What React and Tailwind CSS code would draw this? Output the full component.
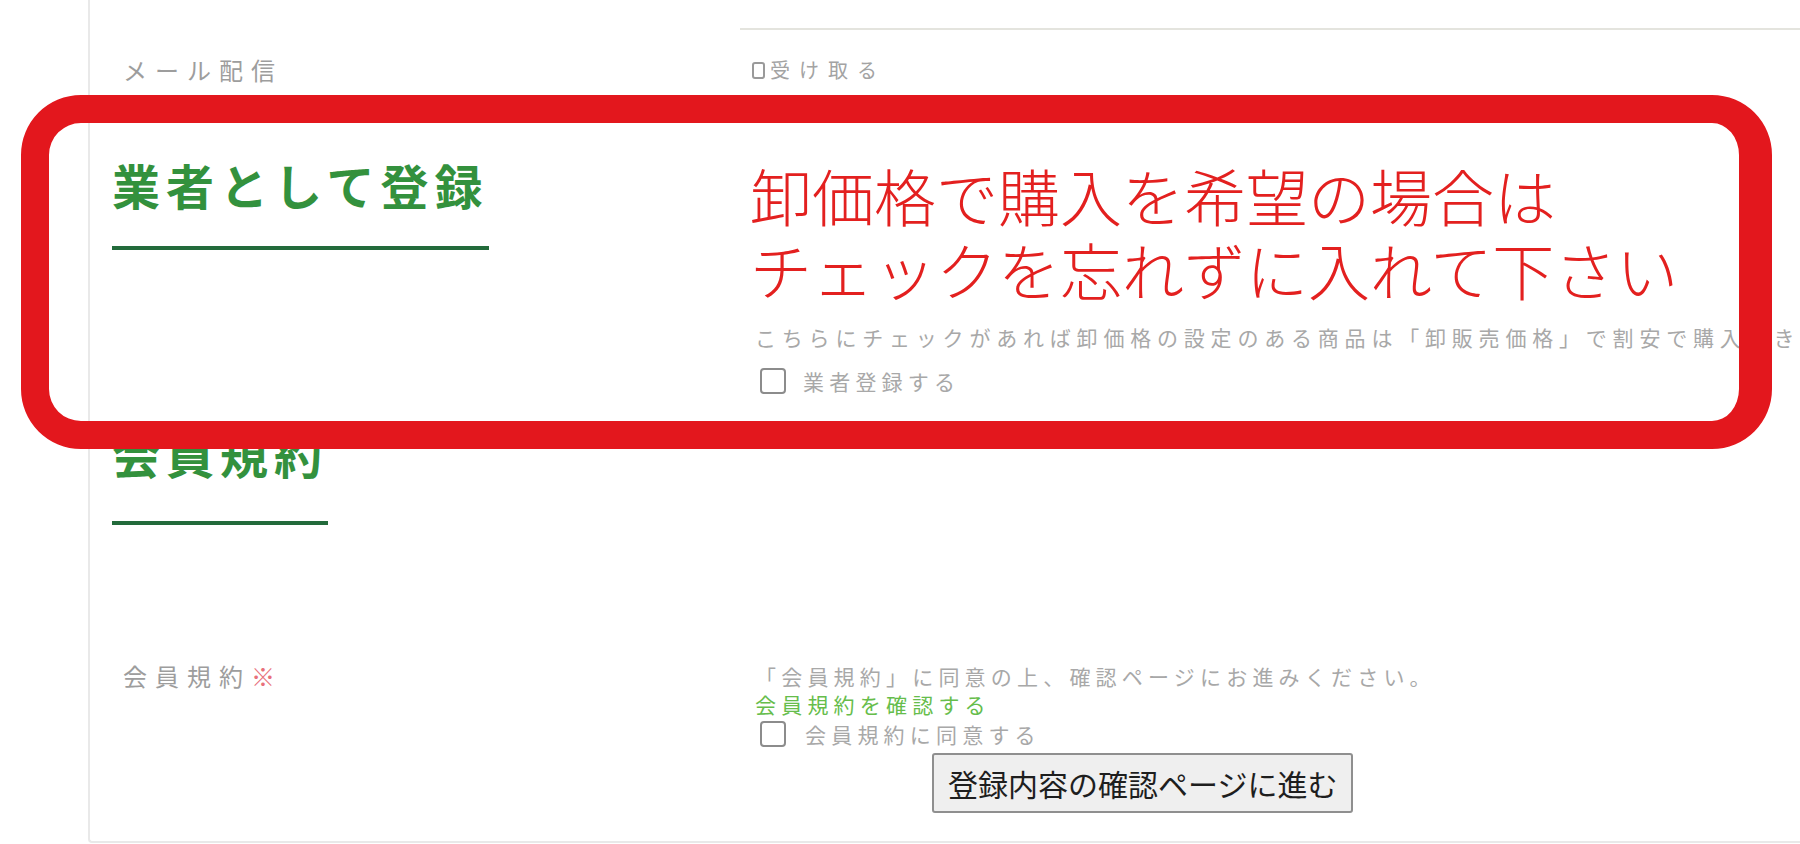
const small = "text-[21px] leading-[28px] tracking-[5.2px] text-[#a8a8a8] whitespace-nowrap";
const label = "text-[24px] tracking-[8px] text-[#9d9d9d]";

function Checkbox() {
  return (
    <span className="inline-block h-[26px] w-[26px] shrink-0 rounded-[4px] border-2 border-[#8c8c8c] bg-white" />
  );
}

function SectionTitle({ children, className = "" }) {
  return (
    <h2
      className={`inline-block border-b-4 border-[#236b3b] text-[48px] font-bold leading-[58px] tracking-[6px] text-[#33913d] ${className}`}
    >
      {children}
    </h2>
  );
}

export default function App() {
  return (
    <div className="relative h-[844px] w-full overflow-hidden bg-white font-['Noto_Sans_CJK_JP',sans-serif]">
      <div className="ml-[88px] h-[843px] w-[1760px] rounded-bl-[4px] border-b-2 border-l-2 border-[#e9e9e9]">
        {/* end of previous row + mail row */}
        <div className="grid grid-cols-[650px_1fr]">
          <div />
          <div className="h-[30px] border-b-2 border-[#e4e4de]" />
          <div className={`pl-[33px] pt-[25px] leading-[30px] ${label}`}>メール配信</div>
          <div className="flex items-center gap-[5px] pl-[12px] pt-[25px] text-[20px] leading-[30px] tracking-[9px] text-[#a3a3a3]">
            <span className="inline-block h-[17px] w-[13px] rounded-[3px] border-2 border-[#9a9a9a]" />
            <span>受け取る</span>
          </div>
        </div>

        {/* business registration */}
        <div className="mt-[67px] grid grid-cols-[650px_1fr]">
          <div className="pl-[22px] pt-[3px]">
            <SectionTitle className="pb-[33px]">業者として登録</SectionTitle>
          </div>
          <div className="pl-[10px] pt-[6px]">
            <p className="text-[62px] font-light leading-[74px] text-[#e3201f]">
              卸価格で購入を希望の場合は
              <br />
              チェックを忘れずに入れて下さい
            </p>
            <p className="mt-[17px] whitespace-nowrap pl-[5px] text-[21px] leading-[28px] tracking-[5.8px] text-[#a8a8a8]">
              こちらにチェックがあれば卸価格の設定のある商品は「卸販売価格」で割安で購入できます。
            </p>
            <label className={`mt-[16px] flex items-center gap-[17px] pl-[10px] ${small}`}>
              <Checkbox />
              <span>業者登録する</span>
            </label>
          </div>
        </div>

        {/* terms */}
        <div className="mt-[29px] pl-[22px]">
          <SectionTitle className="pb-[39px]">会員規約</SectionTitle>
        </div>
        <div className="mt-[137px] grid grid-cols-[650px_1fr]">
          <div className={`pl-[33px] leading-[28px] ${label}`}>
            会員規約<span className="text-[#e8707a]">※</span>
          </div>
          <div className="pl-[15px]">
            <p className={small}>「会員規約」に同意の上、確認ページにお進みください。</p>
            <p className="text-[21px] leading-[28px] tracking-[5.2px] text-[#66bd4b]">会員規約を確認する</p>
            <label className={`flex h-[32px] items-center gap-[19px] pl-[5px] ${small}`}>
              <Checkbox />
              <span>会員規約に同意する</span>
            </label>
            <div className="mt-[3px] pl-[177px]">
              <button className="rounded-[3px] border-2 border-[#8f8f8f] bg-[#efefef] px-[14px] py-[10px] text-[30px] leading-[36px] text-[#1e1e1e]">
                登録内容の確認ページに進む
              </button>
            </div>
          </div>
        </div>
      </div>

      {/* red annotation frame */}
      <div className="pointer-events-none absolute left-[21px] top-[95px] h-[354px] w-[1751px] rounded-[60px] border-[28px] border-r-[33px] border-[#e3171d]" />
    </div>
  );
}
